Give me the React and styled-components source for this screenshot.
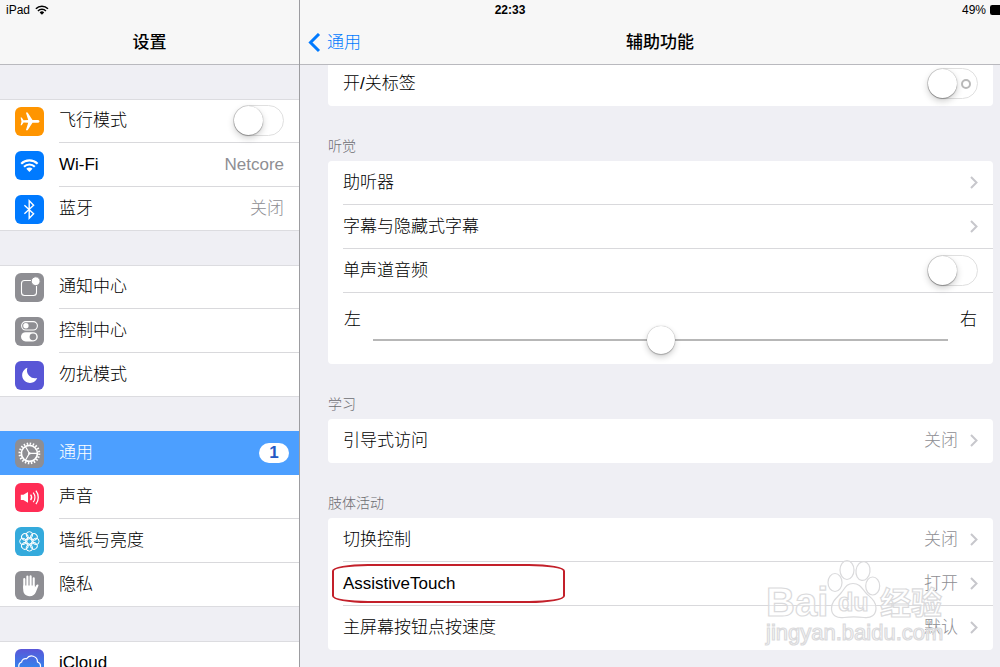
import styled, { createGlobalStyle, css } from 'styled-components';

const GlobalStyle = createGlobalStyle`
    *, *::before, *::after {
        box-sizing: border-box;
    }

    body {
        margin: 0;
        overflow: hidden;
        background-color: #efeff4;
        color: #000;
        font-family: "Liberation Sans", "Noto Sans CJK SC", sans-serif;
        font-size: 17px;
        font-weight: 300;
        line-height: 20px;
    }
`;

/* the screen is a little wider than the window, its right edge is cut off */
const Screen = styled.div`
    position: relative;
    display: grid;
    grid-template-columns: 300px 1fr;
    width: calc(100% + 20px);
    height: 100vh;
    overflow: hidden;
`;

const StatusBar = styled.div`
    position: absolute;
    z-index: 2;
    top: 0;
    left: 0;
    right: 0;
    height: 20px;
    padding: 0 6px;
    display: grid;
    grid-template-columns: 1fr auto 1fr;
    align-items: center;
    font-size: 12px;
    font-weight: 400;
`;

const StatusItem = styled.div`
    display: flex;
    align-items: center;
    gap: ${(props) => (props.$end ? 4 : 5)}px;
    justify-content: ${(props) => (props.$end ? 'flex-end' : 'flex-start')};
`;

const Time = styled.strong`
    font-weight: 700;
`;

const Sidebar = styled.nav`
    min-width: 0;
    overflow: hidden;
    border-right: 1px solid #9c9ca0;
`;

const Main = styled.main`
    min-width: 0;
    overflow: hidden;
`;

const Header = styled.header`
    position: relative;
    z-index: 1;
    display: grid;
    grid-template-columns: 1fr auto 1fr;
    align-items: center;
    height: 65px;
    padding: 22px 8px 0;
    background-color: #f7f7f7;
    border-bottom: 1px solid #b9b9be;
`;

const Title = styled.h1`
    grid-column: 2;
    margin: 0;
    font-size: 17px;
    font-weight: 500;
`;

const Back = styled.a`
    justify-self: start;
    display: flex;
    align-items: center;
    gap: 6px;
    color: #007aff;
    text-decoration: none;
`;

const SideGroups = styled.div`
    display: flex;
    flex-direction: column;
    gap: 34px;
    padding-top: 34px;
`;

const SideGroup = styled.div`
    background-color: #fff;
    box-shadow: inset 0 1px #dcdce0, inset 0 -1px #dcdce0;
`;

const rowBase = css`
    display: flex;
    align-items: center;
    height: 44px;
    padding-left: 15px;
    color: inherit;
    text-decoration: none;
`;

const SideRow = styled.a`
    ${rowBase}
    gap: 15px;
    ${(props) => props.$active && css`
        background-color: #4c9fff;
        color: #fff;
    `}
`;

const RowBody = styled.span`
    flex: 1;
    display: flex;
    align-items: center;
    height: 44px;
    padding-right: ${(props) => (props.$badge ? 10 : 15)}px;
    border-bottom: 1px solid ${(props) => (props.$line ? '#d9d9dc' : 'transparent')};
`;

const Label = styled.span`
    flex: 1;
`;

const Value = styled.span`
    color: #8e8e93;
    margin-right: ${(props) => (props.$spaced ? 12 : 0)}px;
`;

const Badge = styled.span`
    width: 30px;
    border-radius: 10px;
    background-color: #fff;
    color: #2459c4;
    font-weight: 700;
    text-align: center;
`;

const Toggle = styled.input`
    appearance: none;
    position: relative;
    width: 51px;
    height: 31px;
    margin: 0;
    border: 1px solid #e0e0e0;
    border-radius: 16px;
    background-color: #fff;

    &::before {
        content: '';
        position: absolute;
        top: 0;
        left: 0;
        width: 29px;
        height: 29px;
        border-radius: 50%;
        background-color: #fff;
        box-shadow: 0 0 1px rgba(0, 0, 0, 0.4), 0 1px 1px rgba(0, 0, 0, 0.25), 0 3px 7px rgba(0, 0, 0, 0.2);
    }

    ${(props) => props.$marked && css`
        &::after {
            content: '';
            position: absolute;
            top: 10px;
            right: 6px;
            width: 10px;
            height: 10px;
            border: 2px solid #b8b8b8;
            border-radius: 50%;
        }
    `}
`;

const Content = styled.div`
    margin-top: -3px;
    padding: 0 27px 0 28px;
`;

const SectionTitle = styled.h2`
    height: 55px;
    margin: 0;
    padding-top: 30px;
    color: #6d6d72;
    font-size: 14px;
    font-weight: 300;
`;

const List = styled.div`
    position: relative;
    border-radius: 4px;
    background-color: #fff;
`;

const Row = styled.a`
    ${rowBase}
    position: relative;
`;

const SliderRow = styled.div`
    display: flex;
    align-items: flex-start;
    gap: 12px;
    height: 71px;
    padding: 17px 16px 0;
`;

const Slider = styled.input`
    appearance: none;
    flex: 1;
    min-width: 0;
    height: 28px;
    margin: 16px 0 0;
    background: linear-gradient(#b7b7b7, #b7b7b7) center / 100% 2px no-repeat;

    &::-webkit-slider-thumb {
        appearance: none;
        width: 28px;
        height: 28px;
        border-radius: 50%;
        background-color: #fff;
        box-shadow: 0 0 1px rgba(0, 0, 0, 0.4), 0 1px 1px rgba(0, 0, 0, 0.2), 0 3px 6px rgba(0, 0, 0, 0.2);
    }
`;

const RedMark = styled.span`
    position: absolute;
    top: 2px;
    left: 4px;
    width: 233px;
    height: 39px;
    border: 2px solid #c3202a;
    border-radius: 36px / 7px;
`;

const WatermarkSvg = styled.svg`
    position: absolute;
    right: 43px;
    bottom: 0;
    pointer-events: none;
`;

const IconSvg = styled.svg`
    flex: none;
    border-radius: 6px;
    background: ${(props) => props.$bg};
`;

const Icon = ({ bg, children }) => (
    <IconSvg $bg={bg} width="29" height="29" viewBox="0 0 29 29" fill="none" stroke="#fff" aria-hidden="true">
        {children}
    </IconSvg>
);

const WifiShape = () => (
    <>
        <path d="M6.2 12.8a11.6 11.6 0 0 1 16.4 0M9 15.8a7.6 7.6 0 0 1 10.8 0" strokeWidth="2.1" />
        <path d="M14.4 21l-3.1-3.2a4.4 4.4 0 0 1 6.2 0z" fill="currentColor" stroke="none" />
    </>
);

const PlaneIcon = () => (
    <Icon bg="#ff9500">
        <path
            d="M24.5 14.4c0-.9-1.1-1.4-2.4-1.4h-4.6L12.6 5.6h-1.7L13.2 13l-4.6.2-1.9-2.6H5.6l.9 3.8-.9 3.8h1.1l1.9-2.6 4.6.2-2.3 7.4h1.7l4.9-7.4h4.6c1.3 0 2.4-.5 2.4-1.4z"
            fill="#fff"
            stroke="none"
        />
    </Icon>
);

const WifiIcon = () => (
    <Icon bg="#007aff">
        <g color="#fff"><WifiShape /></g>
    </Icon>
);

const BluetoothIcon = () => (
    <Icon bg="#007aff">
        <path d="M9.4 10.2l9.2 8.6-4.4 4.4V5.8l4.4 4.4-9.2 8.6" strokeWidth="1.4" />
    </Icon>
);

const NoticeIcon = () => (
    <Icon bg="#8e8e93">
        <rect x="6.5" y="7.5" width="15" height="15" rx="3" strokeWidth="1.1" />
        <circle cx="20.7" cy="8.2" r="4.4" fill="#fff" stroke="#8e8e93" />
    </Icon>
);

const ControlIcon = () => (
    <Icon bg="#8e8e93">
        <rect x="6.6" y="4.6" width="15.8" height="8.4" rx="4.2" strokeWidth="1.1" />
        <circle cx="10.9" cy="8.8" r="2.7" fill="#fff" stroke="none" />
        <rect x="6" y="15.2" width="16.8" height="9.2" rx="4.6" fill="#fff" stroke="none" />
        <circle cx="18" cy="19.8" r="3.4" fill="#8e8e93" stroke="none" />
    </Icon>
);

const MoonIcon = () => (
    <Icon bg="#5856d6">
        <path d="M12.4 6.8a7.8 7.8 0 1 0 9.8 10.2 8 8 0 0 1-9.8-10.2z" fill="#fff" stroke="none" />
    </Icon>
);

const GearIcon = () => (
    <Icon bg="#8e8e93">
        <circle cx="14.4" cy="14.4" r="9.8" strokeWidth="2.2" strokeDasharray="1.5 1.579" />
        <circle cx="14.4" cy="14.4" r="8" strokeWidth="1.7" />
        <path d="M14.4 14.4h8M14.4 14.4l-4-6.9M14.4 14.4l-4 6.9" strokeWidth="1.1" />
        <circle cx="14.4" cy="14.4" r="1.2" fill="#fff" stroke="none" />
    </Icon>
);

const SoundIcon = () => (
    <Icon bg="#ff2d55">
        <path d="M5.8 11.8h2.6L13 9v10.8L8.4 17H5.8z" fill="#fff" stroke="none" />
        <path d="M15.6 11.6a4.6 4.6 0 0 1 0 5.6M18.2 9.6a7.6 7.6 0 0 1 0 9.6M20.9 7.6a11 11 0 0 1 0 13.6" strokeWidth="1.3" />
    </Icon>
);

const petals = [0, 45, 90, 135, 180, 225, 270, 315];

const FlowerIcon = () => (
    <Icon bg="#34aadc">
        {petals.map((angle) => (
            <circle key={angle} cx="14.4" cy="7.9" r="3.2" transform={`rotate(${angle} 14.4 14.4)`} />
        ))}
        <circle cx="14.4" cy="14.4" r="2.6" />
        {petals.map((angle) => (
            <path key={angle} d="M14.4 11.8v-1.6" transform={`rotate(${angle} 14.4 14.4)`} />
        ))}
    </Icon>
);

const HandIcon = () => (
    <Icon bg="#8e8e93">
        <path d="M9.3 8V17M12.4 5.6V16M15.6 5.4V16M18.7 7.2V17" strokeWidth="2.1" strokeLinecap="round" />
        <path
            d="M8.2 14.6h11.5v2.2l1.4-2.4c.6-1 1.6-1.2 2.2-.7.4.3.1 1-.1 1.5L20.9 21c-1 2.6-3 4.2-6.3 4.2-4.2 0-6.4-2.8-6.4-6.6z"
            fill="#fff"
            stroke="none"
        />
    </Icon>
);

const CloudIcon = () => (
    <Icon bg="linear-gradient(#5a56d8, #1f9cf8)">
        <path d="M8 21.5a4.4 4.4 0 0 1-1.4-8.5 3.7 3.7 0 0 1 5-3.2 5.9 5.9 0 0 1 10.9 3.2 4.4 4.4 0 0 1-.5 8.5z" strokeWidth="1.2" />
    </Icon>
);

const Chevron = () => (
    <svg width="8" height="13" viewBox="0 0 8 13" fill="none" stroke="#c7c7cc" strokeWidth="2" aria-hidden="true">
        <path d="M1 1l5.5 5.5L1 12" />
    </svg>
);

const BackChevron = () => (
    <svg width="13" height="20" viewBox="0 0 13 20" fill="none" stroke="#007aff" strokeWidth="3" aria-hidden="true">
        <path d="M11 1l-8.5 8.5L11 18" />
    </svg>
);

const Watermark = () => (
    <WatermarkSvg width="190" height="95" viewBox="0 0 190 95" fill="#fff" fillOpacity="0.4" stroke="#dadadc" strokeWidth="1.2" aria-hidden="true">
        <ellipse cx="75" cy="27.5" rx="7" ry="9" />
        <ellipse cx="87" cy="15" rx="7" ry="9.5" />
        <ellipse cx="103" cy="16" rx="7" ry="9.5" transform="rotate(8 103 16)" />
        <ellipse cx="112.7" cy="31" rx="7" ry="9" />
        <path d="M93 28.5c7 0 9 5 13 9.5c5 5 10 8 10 15 0 7-5 10.5-12 9.5-8-1-13-1-20 0-7 1-12.5-2-12.5-9 0-7 5-10.5 9.5-15.5 4-4.5 5-9.5 12-9.5z" />
        <text x="6" y="61" fontSize="40" fontWeight="700">Bai</text>
        <text x="78" y="56" fontSize="25" fontWeight="700">du</text>
        <text x="120" y="59" fontSize="31" fontWeight="700">经验</text>
        <text x="6" y="85" fontSize="22" fontWeight="400">jingyan.baidu.com</text>
    </WatermarkSvg>
);

const sideGroups = [
    [
        { id: 'airplane', label: '飞行模式', icon: PlaneIcon, toggle: true },
        { id: 'wifi', label: 'Wi-Fi', icon: WifiIcon, value: 'Netcore' },
        { id: 'bluetooth', label: '蓝牙', icon: BluetoothIcon, value: '关闭' },
    ],
    [
        { id: 'notifications', label: '通知中心', icon: NoticeIcon },
        { id: 'control', label: '控制中心', icon: ControlIcon },
        { id: 'dnd', label: '勿扰模式', icon: MoonIcon },
    ],
    [
        { id: 'general', label: '通用', icon: GearIcon, badge: 1, active: true },
        { id: 'sounds', label: '声音', icon: SoundIcon },
        { id: 'wallpaper', label: '墙纸与亮度', icon: FlowerIcon },
        { id: 'privacy', label: '隐私', icon: HandIcon },
    ],
    [{ id: 'icloud', label: 'iCloud', icon: CloudIcon }],
];

function SideItem({ item, last }) {
    const ItemIcon = item.icon;
    const rowProps = item.toggle ? { as: 'label', htmlFor: item.id } : { href: `#${item.id}` };

    return (
        <SideRow {...rowProps} $active={item.active}>
            <ItemIcon />
            <RowBody $line={!last && !item.active} $badge={item.badge}>
                <Label>{item.label}</Label>
                {item.value && <Value>{item.value}</Value>}
                {item.badge && <Badge>{item.badge}</Badge>}
                {item.toggle && <Toggle id={item.id} type="checkbox" />}
            </RowBody>
        </SideRow>
    );
}

function LinkRow({ id, label, value, line, marked }) {
    return (
        <Row href={`#${id}`}>
            <RowBody $line={line}>
                <Label>{label}</Label>
                {value && <Value $spaced>{value}</Value>}
                <Chevron />
            </RowBody>
            {marked && <RedMark />}
        </Row>
    );
}

function ToggleRow({ id, label, line, marked }) {
    return (
        <Row as="label" htmlFor={id}>
            <RowBody $line={line}>
                <Label>{label}</Label>
                <Toggle id={id} type="checkbox" $marked={marked} />
            </RowBody>
        </Row>
    );
}

function App() {
    return (
        <Screen>
            <GlobalStyle />
            <Sidebar>
                <Header>
                    <Title>设置</Title>
                </Header>
                <SideGroups>
                    {sideGroups.map((group) => (
                        <SideGroup key={group[0].id}>
                            {group.map((item, i) => (
                                <SideItem key={item.id} item={item} last={i === group.length - 1} />
                            ))}
                        </SideGroup>
                    ))}
                </SideGroups>
            </Sidebar>
            <Main>
                <Header>
                    <Back href="#general"><BackChevron />通用</Back>
                    <Title>辅助功能</Title>
                </Header>
                <Content>
                    <List>
                        <ToggleRow id="labels" label="开/关标签" marked />
                    </List>
                    <section>
                        <SectionTitle>听觉</SectionTitle>
                        <List>
                            <LinkRow id="hearing" label="助听器" line />
                            <LinkRow id="captions" label="字幕与隐藏式字幕" line />
                            <ToggleRow id="mono" label="单声道音频" line />
                            <SliderRow>
                                <label htmlFor="balance">左</label>
                                <Slider id="balance" type="range" min="0" max="100" defaultValue="50" />
                                <label htmlFor="balance">右</label>
                            </SliderRow>
                        </List>
                    </section>
                    <section>
                        <SectionTitle>学习</SectionTitle>
                        <List>
                            <LinkRow id="guided" label="引导式访问" value="关闭" />
                        </List>
                    </section>
                    <section>
                        <SectionTitle>肢体活动</SectionTitle>
                        <List>
                            <LinkRow id="switch" label="切换控制" value="关闭" line />
                            <LinkRow id="assistive" label="AssistiveTouch" value="打开" line marked />
                            <LinkRow id="home" label="主屏幕按钮点按速度" value="默认" />
                            <Watermark />
                        </List>
                    </section>
                </Content>
            </Main>
            <StatusBar>
                <StatusItem>
                    iPad
                    <svg width="14" height="12" viewBox="5 6.5 19 16" fill="none" stroke="currentColor" aria-hidden="true">
                        <WifiShape />
                    </svg>
                </StatusItem>
                <Time>22:33</Time>
                <StatusItem $end>
                    49%
                    <svg width="24" height="10" viewBox="0 0 24 10" aria-hidden="true">
                        <rect x="0.5" y="0.5" width="21" height="9" rx="1" fill="none" stroke="#000" />
                        <rect x="1" y="1" width="10" height="8" />
                        <path d="M23 3v4" stroke="#000" />
                    </svg>
                </StatusItem>
            </StatusBar>
        </Screen>
    );
}

export default App;
